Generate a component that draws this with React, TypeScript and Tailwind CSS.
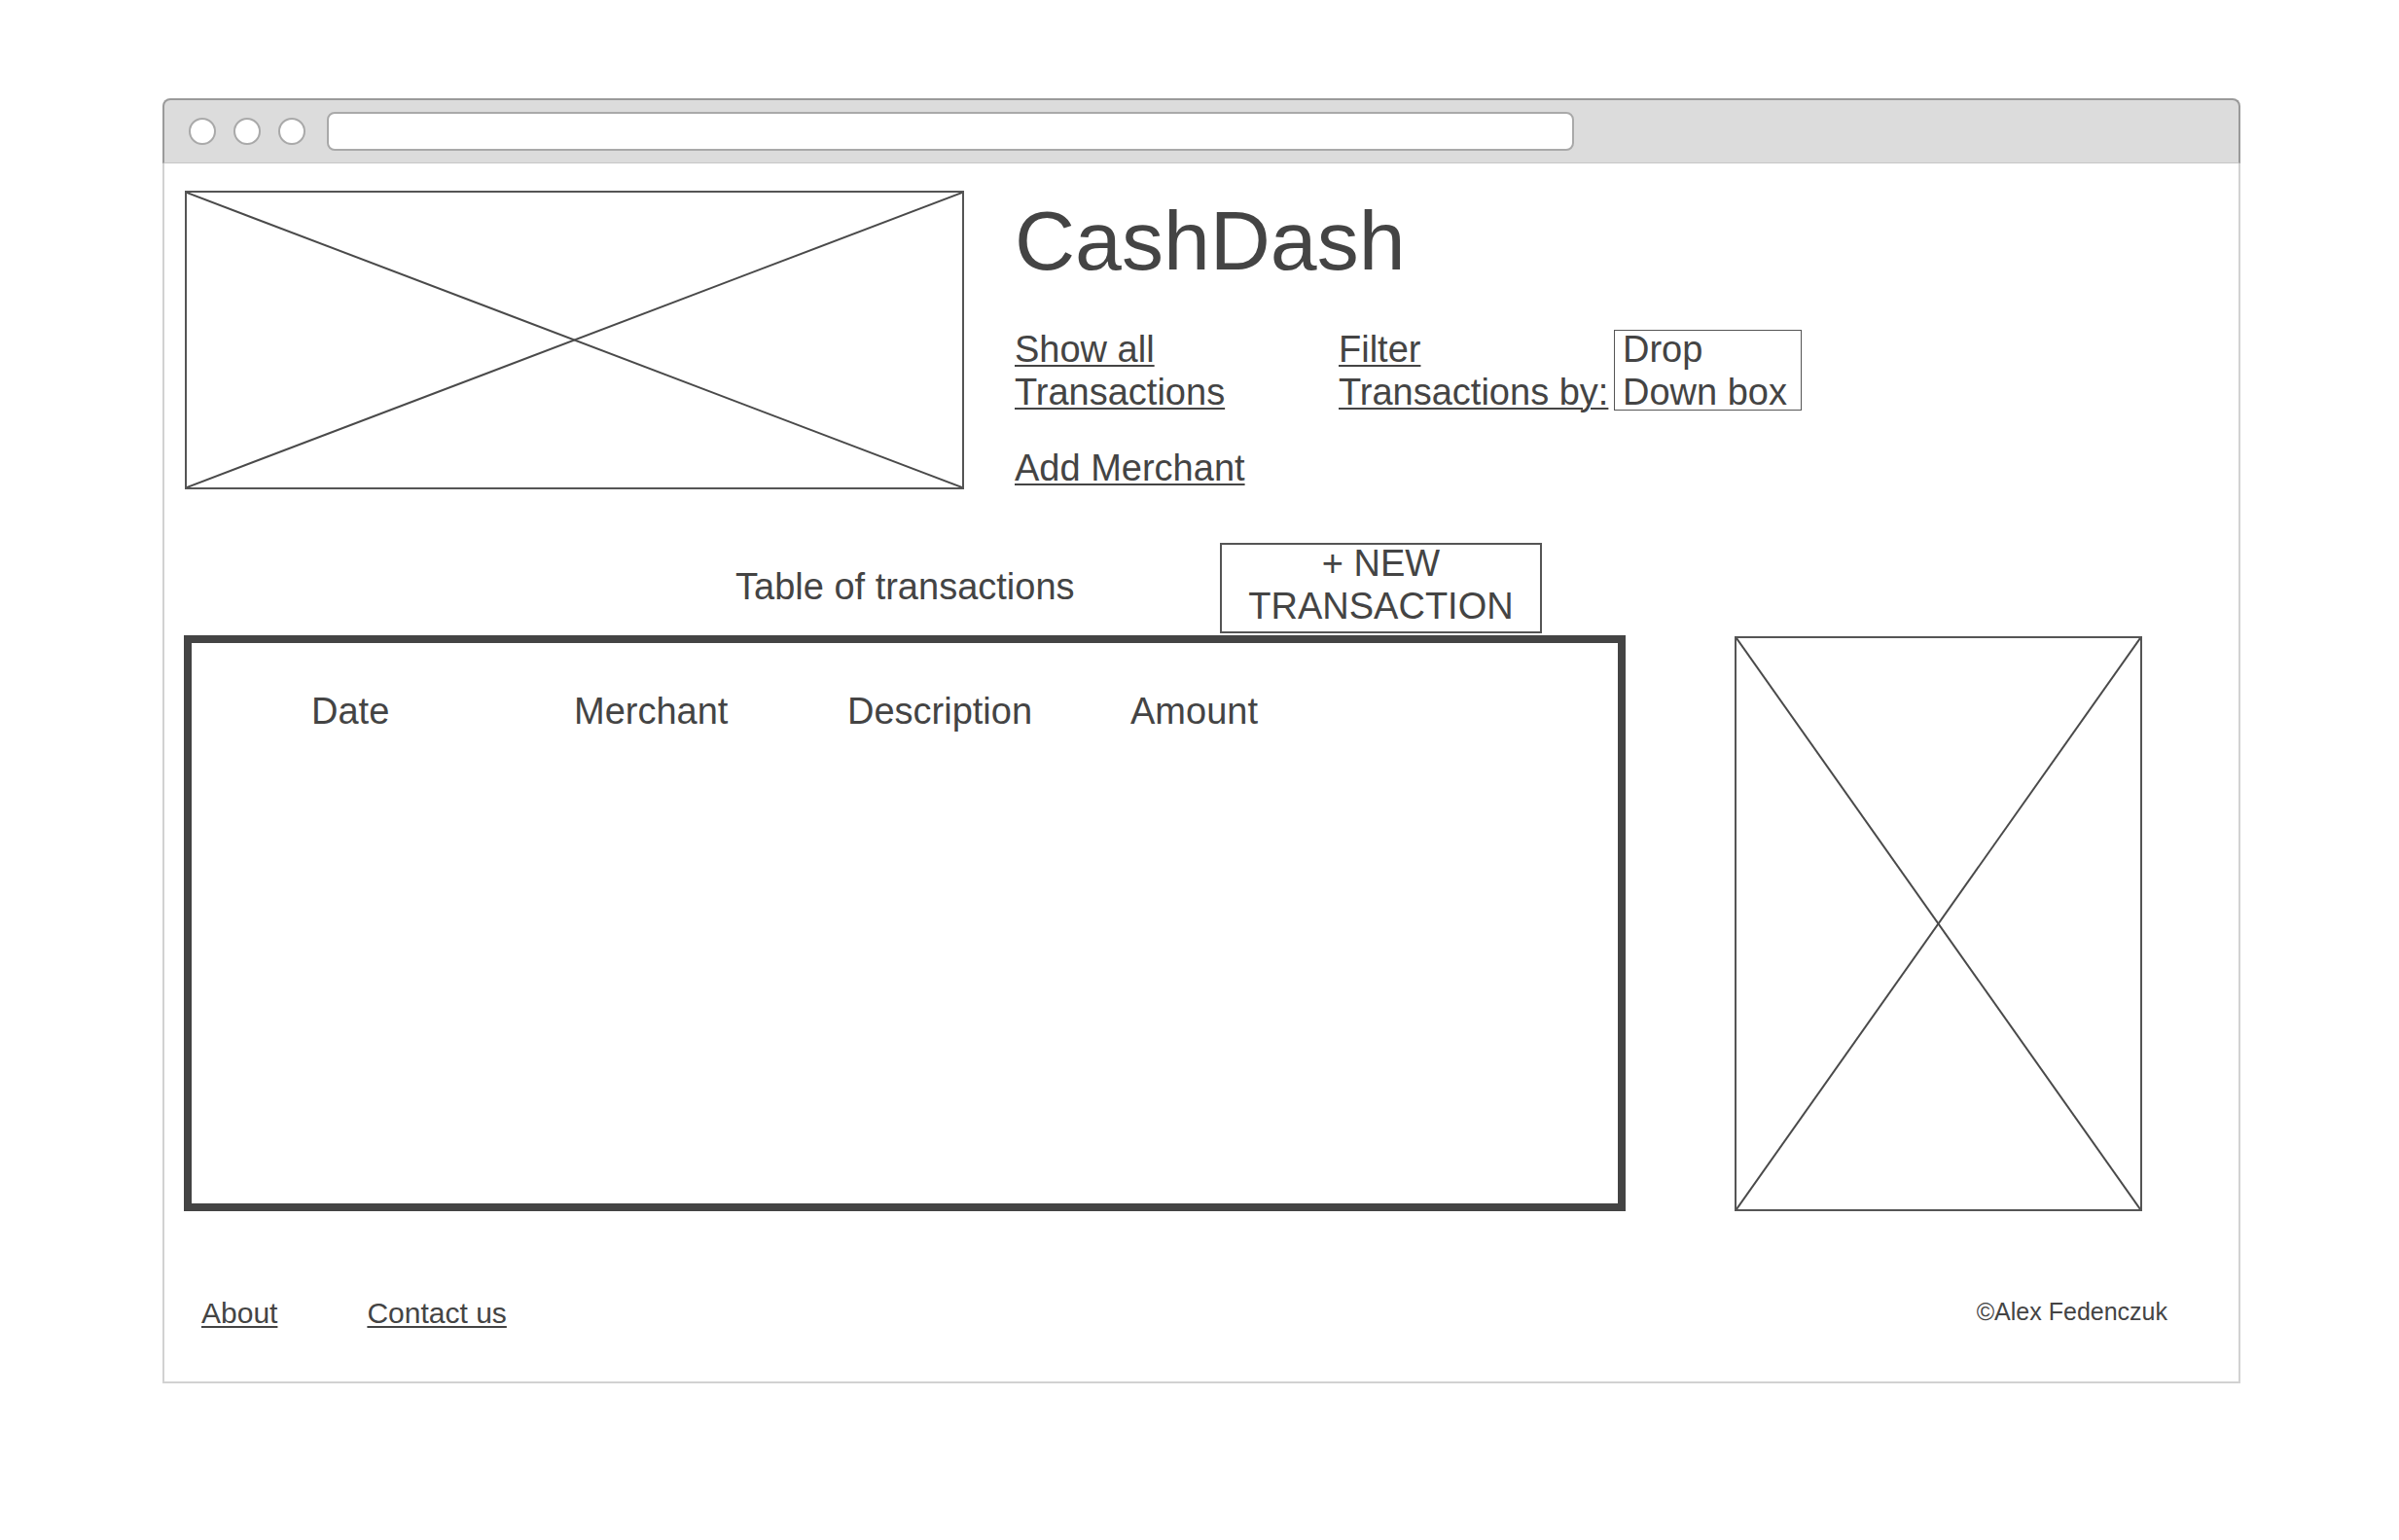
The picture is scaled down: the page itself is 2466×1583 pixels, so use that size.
const headers = [
  { label: "Date", w: "w-[270px]" },
  { label: "Merchant", w: "w-[281px]" },
  { label: "Description", w: "w-[291px]" },
  { label: "Amount", w: "w-auto" },
];

function Placeholder({ className }: { className: string }) {
  return (
    <div className={className}>
      <svg className="block w-full h-full" viewBox="0 0 100 100" preserveAspectRatio="none">
        <line x1="0" y1="0" x2="100" y2="100" stroke="#4a4a4a" strokeWidth="2" vectorEffect="non-scaling-stroke" />
        <line x1="100" y1="0" x2="0" y2="100" stroke="#4a4a4a" strokeWidth="2" vectorEffect="non-scaling-stroke" />
      </svg>
    </div>
  );
}

export default function App() {
  return (
    <div
      className="w-[2466px] h-[1583px] bg-white pt-[101px] pl-[167px] text-[#444444]"
      style={{ fontFamily: '"Liberation Sans", Arial, sans-serif' }}
    >
      <div className="w-[2136px] h-[1321px] flex flex-col">
        {/* browser chrome */}
        <div className="h-[67px] shrink-0 bg-[#dcdcdc] border-2 border-b border-[#9a9a9a] border-b-[#c6c6c6] rounded-t-[8px] flex items-center pl-[25px]">
          <div className="flex gap-[18px]">
            <div className="w-[28px] h-[28px] rounded-full bg-white border-2 border-[#a9a9a9]" />
            <div className="w-[28px] h-[28px] rounded-full bg-white border-2 border-[#a9a9a9]" />
            <div className="w-[28px] h-[28px] rounded-full bg-white border-2 border-[#a9a9a9]" />
          </div>
          <div className="ml-[22px] w-[1282px] h-[40px] bg-white rounded-[8px] border-2 border-[#a9a9a9]" />
        </div>

        <div className="flex-1 flex flex-col border-2 border-t-0 border-[#d2d2d2] bg-white">
          {/* header */}
          <div className="flex items-start pt-[28px] pl-[21px]">
            <Placeholder className="w-[801px] h-[307px] border-2 border-[#555555] shrink-0" />
            <div className="ml-[52px] mt-[8px] flex flex-col">
              <h1 className="text-[86px] leading-[86px] font-normal">CashDash</h1>
              <div className="mt-[47px] flex items-start text-[38px] leading-[44px]">
                <a className="w-[333px] underline decoration-2 underline-offset-[3px]">
                  Show all<br />Transactions
                </a>
                <a className="w-[283px] underline decoration-2 underline-offset-[3px]">
                  Filter<br />Transactions by:
                </a>
                <div className="w-[193px] h-[83px] mt-[2px] border border-[#555555] pl-[8px]">
                  <div className="-mt-[3px]">Drop<br />Down box</div>
                </div>
              </div>
              <a className="mt-[34px] text-[38px] leading-[44px] underline decoration-2 underline-offset-[3px]">
                Add Merchant
              </a>
            </div>
          </div>

          {/* table title + button */}
          <div className="flex items-start mt-[55px] pl-[587px] text-[38px] leading-[44px]">
            <div className="w-[498px] mt-[23px]">Table of transactions</div>
            <div className="w-[331px] h-[93px] border-2 border-[#555555] text-center">
              <div className="-mt-[3px]">+ NEW<br />TRANSACTION</div>
            </div>
          </div>

          {/* table + side image */}
          <div className="flex items-start mt-[2px] pl-[20px]">
            <div className="w-[1482px] h-[592px] border-[8px] border-[#444444] shrink-0">
              <div className="flex pl-[123px] pt-[48px] text-[38px] leading-[44px]">
                {headers.map((h) => (
                  <div key={h.label} className={h.w}>{h.label}</div>
                ))}
              </div>
            </div>
            <Placeholder className="ml-[112px] mt-[1px] w-[419px] h-[591px] border-2 border-[#555555]" />
          </div>

          {/* footer */}
          <div className="flex items-start justify-between mt-[87px] pl-[38px] pr-[73px]">
            <div className="flex gap-[92px] text-[30px] leading-[36px]">
              <a className="underline decoration-2 underline-offset-[3px]">About</a>
              <a className="underline decoration-2 underline-offset-[3px]">Contact us</a>
            </div>
            <div className="-mt-[2px] text-[25px] leading-[36px]">©Alex Fedenczuk</div>
          </div>
        </div>
      </div>
    </div>
  );
}
